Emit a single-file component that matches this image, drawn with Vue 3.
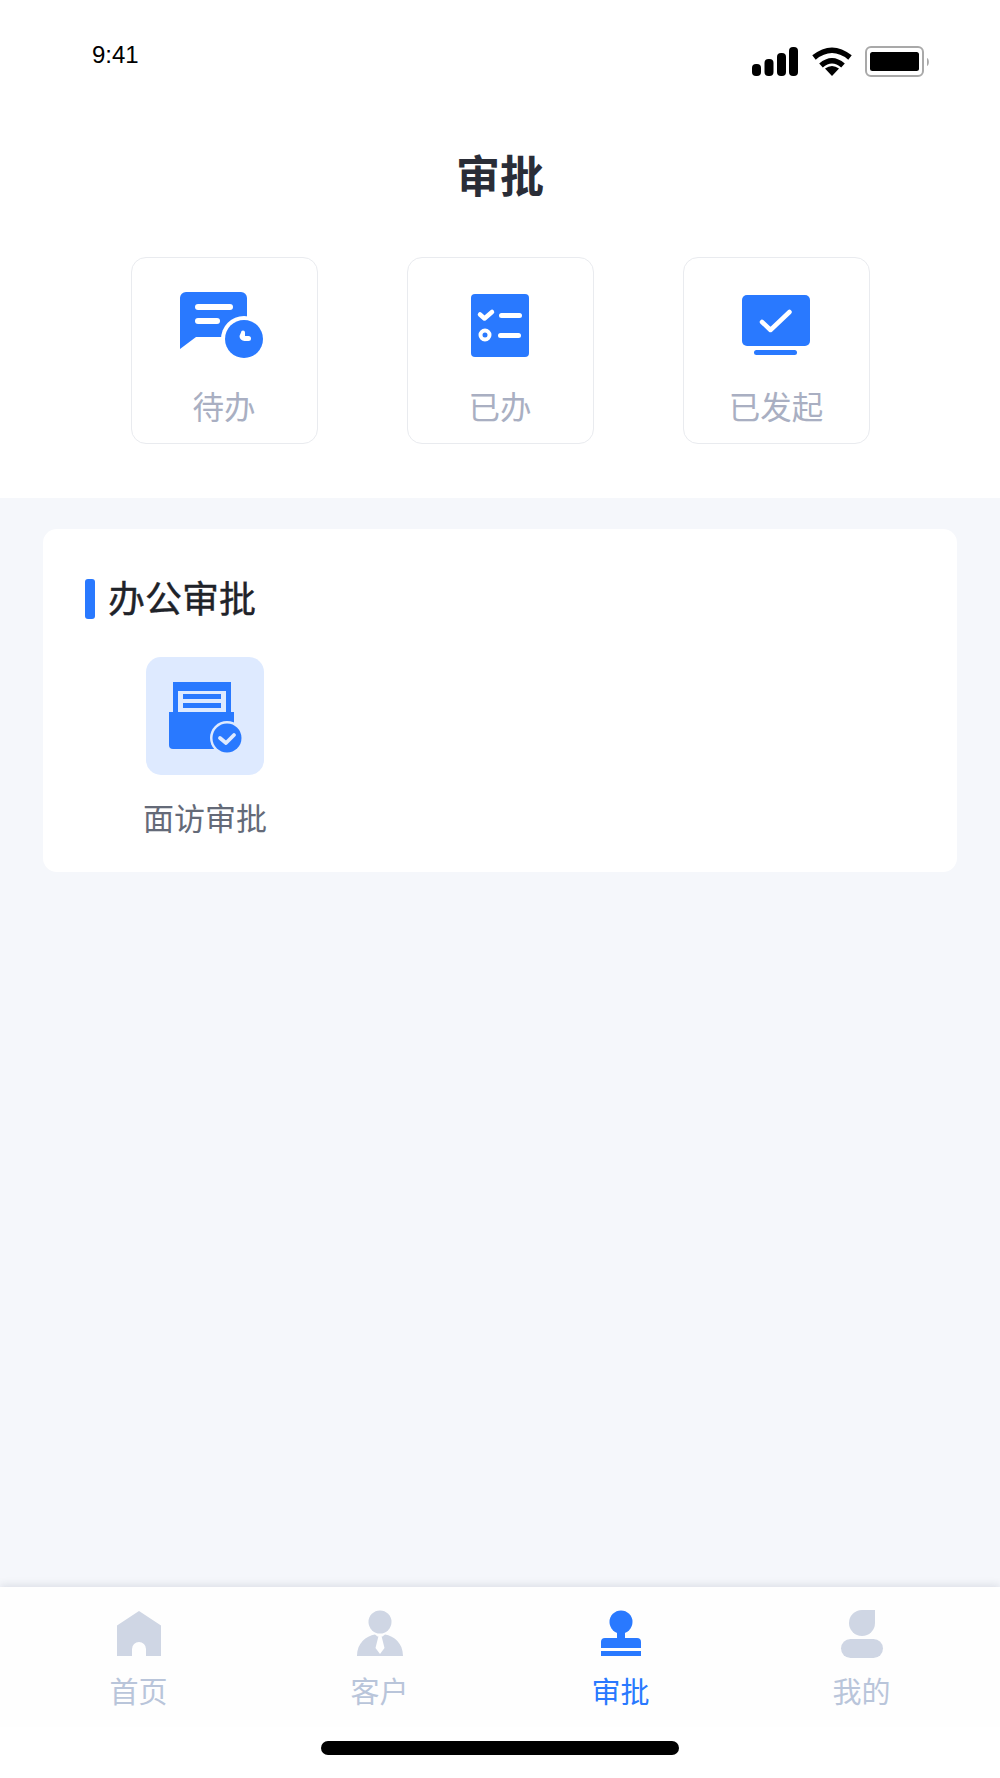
<script setup>
const tabs = [
  { label: '首页', key: 'home' },
  { label: '客户', key: 'client' },
  { label: '审批', key: 'stamp', active: true },
  { label: '我的', key: 'me' },
]
</script>

<template>
  <div class="page">
    <section class="top">
      <div class="status">
        <span class="time">9:41</span>
        <div class="status-icons">
          <svg width="46" height="32" viewBox="0 -1 46 32" fill="#000">
            <rect x="0" y="17" width="9" height="12" rx="4" />
            <rect x="12.500" y="12" width="9" height="17" rx="4" />
            <rect x="25" y="6" width="9" height="23" rx="4" />
            <rect x="37" y="0" width="9" height="29" rx="4" />
          </svg>
          <svg width="40" height="32" viewBox="0 -1 40 32" fill="none" stroke="#000" stroke-width="5.500">
            <path d="M2 10.500Q20 -4 38 10.500" />
            <path d="M9 18.500Q20 9 31 18.500" />
            <path d="M20 29l-7-7.500Q20 16.500 27 21.500z" fill="#000" stroke="none" />
          </svg>
          <svg class="battery" width="65" height="32" viewBox="0 0 65 32" fill="none">
            <rect x="1" y="1" width="57" height="29" rx="5" stroke="#a9a9a9" stroke-width="2" />
            <rect x="5" y="6" width="49" height="19" rx="2.500" fill="#000" />
            <path d="M62 12c2.500 1 2.500 7 0 8z" fill="#a9a9a9" />
          </svg>
        </div>
      </div>
      <h1 class="page-title">审批</h1>
      <div class="shortcuts">
        <div class="shortcut">
          <svg class="shortcut-icon" width="100" height="80" viewBox="174 285 100 80">
            <path d="M186 292h55a6 6 0 0 1 6 6v39h-51l-16 12v-51a6 6 0 0 1 6-6z" fill="#2979ff" />
            <rect x="195" y="304" width="38" height="6" rx="3" fill="#fff" />
            <rect x="195" y="318" width="25" height="6" rx="3" fill="#fff" />
            <circle cx="244" cy="339" r="23" fill="#fff" />
            <circle cx="244" cy="339" r="19" fill="#2979ff" />
            <path d="M241 332.500a2 2 0 0 1 4 0v3.500h3.500a2.500 2.500 0 0 1 0 5h-4a5 5 0 0 1-5-5z" fill="#fff" />
          </svg>
          <span class="shortcut-label">待办</span>
        </div>
        <div class="shortcut">
          <svg class="shortcut-icon" width="100" height="80" viewBox="450 285 100 80">
            <rect x="471" y="294" width="58" height="63" rx="4" fill="#2979ff" />
            <path d="M480 314.500l4.500 4 7.500-6.500" fill="none" stroke="#fff" stroke-width="4.500" stroke-linecap="round" stroke-linejoin="round" />
            <rect x="499" y="313" width="23" height="5" rx="2.500" fill="#fff" />
            <circle cx="485" cy="335" r="4.500" fill="none" stroke="#fff" stroke-width="4" />
            <rect x="498" y="333" width="23" height="5" rx="2.500" fill="#fff" />
          </svg>
          <span class="shortcut-label">已办</span>
        </div>
        <div class="shortcut">
          <svg class="shortcut-icon" width="100" height="80" viewBox="726 285 100 80">
            <rect x="742" y="295" width="68" height="51" rx="5" fill="#2979ff" />
            <path d="M762 322l8.500 8 19-18" fill="none" stroke="#fff" stroke-width="4.500" stroke-linecap="round" stroke-linejoin="round" />
            <rect x="754" y="350" width="43" height="5" rx="2.500" fill="#2979ff" />
          </svg>
          <span class="shortcut-label">已发起</span>
        </div>
      </div>
    </section>

    <main class="content">
      <section class="panel">
        <div class="panel-head">
          <i class="panel-bar"></i>
          <h2 class="panel-title">办公审批</h2>
        </div>
        <div class="apps">
          <div class="app">
            <div class="app-box">
              <svg width="90" height="90" viewBox="160 671 90 90">
                <rect x="173" y="682" width="58" height="32" fill="#2979ff" />
                <rect x="178" y="691" width="48" height="21" fill="#deeaff" />
                <rect x="183" y="694" width="38" height="5" fill="#2979ff" />
                <rect x="183" y="703" width="38" height="5" fill="#2979ff" />
                <path d="M169 712h65v37h-61a4 4 0 0 1-4-4z" fill="#2979ff" />
                <circle cx="227" cy="738" r="17" fill="#deeaff" />
                <circle cx="227" cy="738" r="14.500" fill="#2979ff" />
                <path d="M220 738l6 5 8-8" fill="none" stroke="#deeaff" stroke-width="3.800" stroke-linecap="round" stroke-linejoin="round" />
              </svg>
            </div>
            <span class="app-label">面访审批</span>
          </div>
        </div>
      </section>
    </main>

    <footer class="footer">
      <nav class="tabbar">
        <div v-for="t in tabs" :key="t.key" class="tab" :class="{ active: t.active }">
          <svg width="60" height="50" viewBox="0 0 60 50" class="tab-icon">
            <template v-if="t.key === 'home'">
              <path d="M30 2l22 14.500V47H37V40a7 7 0 0 0-14 0v7H8V16.500z" fill="#cfd6e4" />
            </template>
            <template v-else-if="t.key === 'client'">
              <circle cx="30" cy="13" r="11.500" fill="#cfd6e4" />
              <path d="M7 47c0-13 9-20 18-21.500l2.500 2h5l2.500-2c9 1.500 18 8.500 18 21.500z" fill="#cfd6e4" />
              <path d="M28.500 27h3l3 12-4.500 6-4.500-6z" fill="#fff" />
            </template>
            <template v-else-if="t.key === 'stamp'">
              <circle cx="30" cy="13" r="11.500" fill="#2979ff" />
              <path d="M26 21h8v8h12a4 4 0 0 1 4 4v6H10v-6a4 4 0 0 1 4-4h12z" fill="#2979ff" />
              <rect x="10" y="42" width="40" height="5" fill="#2979ff" />
            </template>
            <template v-else>
              <path d="M30 1h13v13a13 13 0 1 1-13-13z" fill="#cfd6e4" />
              <rect x="9" y="30" width="42" height="19" rx="9.500" fill="#cfd6e4" />
            </template>
          </svg>
          <span class="tab-label">{{ t.label }}</span>
        </div>
      </nav>
      <div class="home-area"><i class="home-bar"></i></div>
    </footer>
  </div>
</template>

<style>
html, body { margin: 0; padding: 0; background: #fff; }
</style>

<style scoped>
.page {
  width: 1000px;
  height: 1778px;
  display: flex;
  flex-direction: column;
  background: #f5f7fb;
  font-family: "Noto Sans CJK SC", "Liberation Sans", sans-serif;
  overflow: hidden;
}
.top {
  height: 498px;
  background: #fff;
  box-sizing: border-box;
  padding-top: 44px;
}
.status {
  height: 32px;
  display: flex;
  justify-content: space-between;
  padding: 0 70px 0 92px;
}
.time {
  font-family: "Liberation Sans", sans-serif;
  font-size: 24px;
  line-height: 22px;
  color: #000;
}
.status-icons {
  display: flex;
  gap: 14px;
  padding-top: 2px;
}
.battery { margin-left: -1px; }
.page-title {
  margin: 0;
  padding-top: 68px;
  height: 181px;
  box-sizing: border-box;
  text-align: center;
  font-size: 44px;
  line-height: 60px;
  font-weight: 700;
  color: #2a2d37;
}
.shortcuts {
  display: flex;
  justify-content: center;
  gap: 89px;
}
.shortcut {
  width: 187px;
  height: 187px;
  box-sizing: border-box;
  border: 1.500px solid #e9ebef;
  border-radius: 15px;
  display: flex;
  flex-direction: column;
  align-items: center;
  padding-top: 27px;
}
.shortcut-icon { display: block; }
.shortcut-label {
  margin-top: 18px;
  font-size: 31.500px;
  line-height: 44px;
  color: #a9afc2;
}
.content {
  flex: 1;
  padding: 31px 43px 0;
}
.panel {
  height: 343px;
  box-sizing: border-box;
  background: #fff;
  border-radius: 14px;
  padding: 50px 42px 0;
}
.panel-head {
  display: flex;
  align-items: center;
  gap: 13px;
  height: 40px;
}
.panel-bar {
  width: 10px;
  height: 40px;
  border-radius: 3px;
  background: #2979ff;
}
.panel-title {
  margin: 0;
  padding-bottom: 4px;
  font-size: 37px;
  line-height: 40px;
  font-weight: 400;
  color: #1f2329;
  -webkit-text-stroke: 0.4px #1f2329;
}
.apps {
  display: flex;
  margin-top: 38px;
  padding-left: 48px;
}
.app {
  display: flex;
  flex-direction: column;
  align-items: center;
  width: 144px;
}
.app-box {
  width: 118px;
  height: 118px;
  border-radius: 15px;
  background: #deeaff;
  display: flex;
  align-items: center;
  justify-content: center;
}
.app-box svg { display: block; }
.app-label {
  margin-top: 19px;
  font-size: 31px;
  line-height: 46px;
  white-space: nowrap;
  color: #646a78;
}
.footer {
  height: 191px;
  background: #fff;
  box-shadow: 0 -2px 8px rgba(40, 50, 80, 0.12);
  position: relative;
}
.tabbar {
  height: 140px;
  padding: 0 18px;
  display: flex;
  background: #fefefe;
}
.tab {
  flex: 1;
  display: flex;
  flex-direction: column;
  align-items: center;
  padding-top: 22px;
}
.tab-icon { display: block; }
.tab-label {
  margin-top: 13px;
  font-size: 29px;
  line-height: 36px;
  color: #b9c5da;
}
.tab.active .tab-label { color: #2979ff; }
.home-area {
  display: flex;
  justify-content: center;
  padding-top: 14px;
}
.home-bar {
  width: 358px;
  height: 14px;
  border-radius: 7px;
  background: #000;
}
</style>
